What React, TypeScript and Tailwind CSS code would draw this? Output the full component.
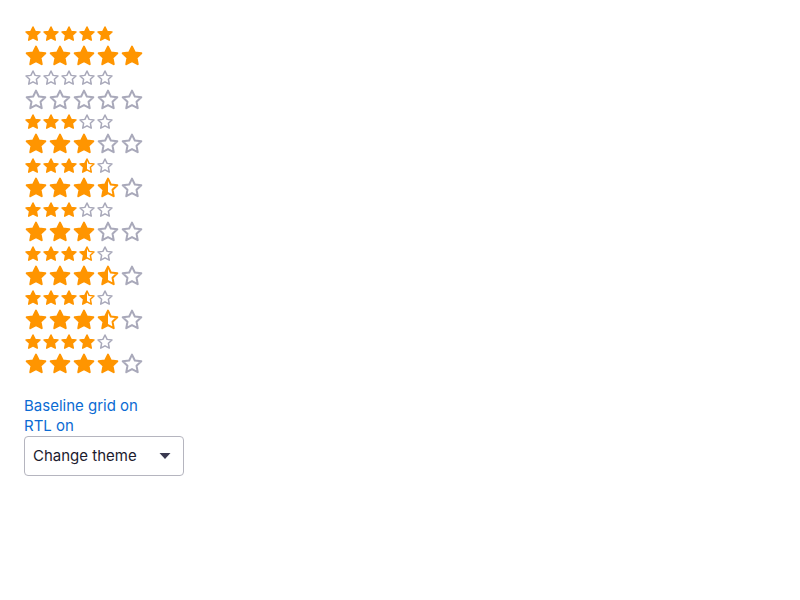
import React from "react";

const STAR =
  "M12 2.6l2.83 5.9 6.47.8-4.77 4.46 1.2 6.42L12 17.05 6.27 20.18l1.2-6.42L2.7 9.3l6.47-.8L12 2.6z";

function Star({ fill, size }: { fill: "full" | "half" | "empty"; size: number }) {
  const id = React.useId();
  const orange = "#ff9500";
  const gray = "#a9a9ba";
  return (
    <svg width={size} height={size} viewBox="0 0 24 24" className="block">
      {fill === "half" && (
        <defs>
          <clipPath id={id}>
            <rect x="0" y="0" width="12" height="24" />
          </clipPath>
        </defs>
      )}
      {fill === "full" && (
        <path d={STAR} fill={orange} stroke={orange} strokeWidth="2" strokeLinejoin="round" />
      )}
      {fill === "half" && (
        <>
          <path d={STAR} fill={orange} clipPath={`url(#${id})`} />
          <path d={STAR} fill="none" stroke={orange} strokeWidth="2" strokeLinejoin="round" />
        </>
      )}
      {fill === "empty" && (
        <path d={STAR} fill="none" stroke={gray} strokeWidth="2" strokeLinejoin="round" />
      )}
    </svg>
  );
}

function Rating({ value, large }: { value: number; large?: boolean }) {
  const stars = [0, 1, 2, 3, 4].map((i) =>
    value >= i + 1 ? "full" : value >= i + 0.5 ? "half" : "empty"
  ) as ("full" | "half" | "empty")[];
  return (
    <div className="flex items-center h-[22px]">
      {stars.map((s, i) => (
        <Star key={i} fill={s} size={large ? 24 : 18} />
      ))}
    </div>
  );
}

const rows = [5, 0, 3, 3.5, 3, 3.5, 3.5, 4];

export default function App() {
  return (
    <div className="min-h-screen bg-white p-6 pt-[23px]" style={{ fontFamily: "Inter, 'Noto Sans', sans-serif" }}>
      <div className="flex flex-col">
        {rows.map((v, i) => (
          <React.Fragment key={i}>
            <Rating value={v} />
            <Rating value={v} large />
          </React.Fragment>
        ))}
      </div>
      <div className="mt-[21px] flex flex-col text-[15px] leading-5 text-[#0b6bd3]">
        <span>Baseline grid on</span>
        <span>RTL on</span>
      </div>
      <button className="flex h-10 w-40 items-center justify-between rounded-[4px] border border-[#b5b5bf] bg-white pl-2 pr-3 text-[15px] text-[#1c1b2e]">
        <span>Change theme</span>
        <svg width="12" height="8" viewBox="0 0 12 8">
          <path d="M0.5 1h11L6 7z" fill="#3a3950" />
        </svg>
      </button>
    </div>
  );
}
